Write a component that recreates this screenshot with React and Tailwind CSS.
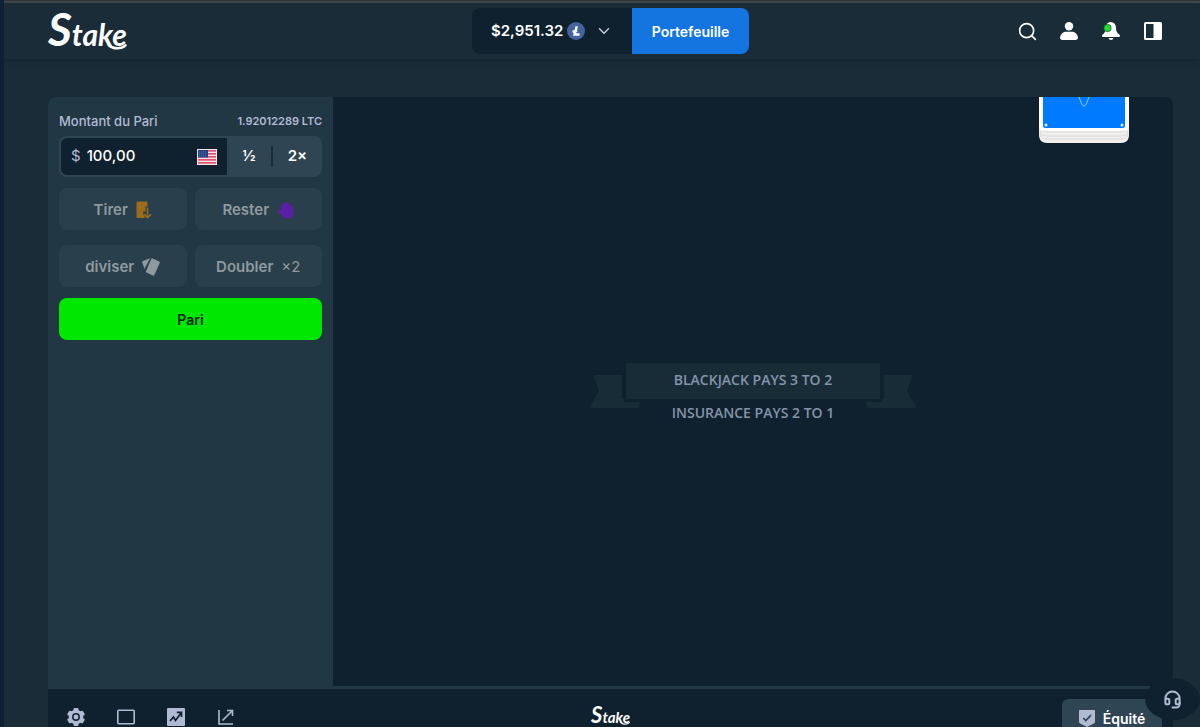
import React, { useState } from 'react';
import { ChevronDown, Headset, Search } from 'lucide-react';

function StakeLogo({ small }) {
  return (
    <a
      href="#"
      className={`relative inline-flex items-baseline font-['Lato'] font-bold italic text-white ${small ? 'text-[15px] leading-5' : 'text-[30px] leading-10'}`}
    >
      <span className={small ? 'text-[22px]' : 'text-[46px]'}>S</span>
      <span>take</span>
      <svg
        viewBox="0 0 20 6"
        className={small ? 'absolute right-0 bottom-0.5 w-2.5' : 'absolute right-0 bottom-1 w-5'}
        fill="none"
        stroke="currentColor"
        strokeWidth="2.500"
        strokeLinecap="round"
      >
        <path d="M2 1.500c4 3.500 12 4 16.500-.2" />
      </svg>
    </a>
  );
}

function UserIcon() {
  return (
    <svg width="18" height="18" viewBox="0 0 18 18" fill="currentColor">
      <circle cx="9" cy="4.200" r="4.200" />
      <path d="M0 15.500C.6 11.800 3.500 9.800 6.200 9.800h5.600c2.700 0 5.600 2 6.200 5.700 0 1.500-1 2.500-2.200 2.500H2.200C1 18 0 17 0 15.500z" />
    </svg>
  );
}

function BellIcon() {
  return (
    <svg width="18" height="18" viewBox="0 0 18 18">
      <path fill="currentColor" d="M8.500 0c4.200.3 5.500 3.200 5.500 6 0 3.500 1.200 5.200 3.500 6.700.8.600.5 2.300-.5 2.300H1c-1.200 0-1.400-1.600-.5-2.300C2.800 11.200 3.500 9.500 3.500 6c0-2.800 1.700-5.800 5-6zM6.600 16h4.800c-.3 1.300-1.200 2-2.400 2s-2.100-.7-2.400-2z" />
      <circle cx="5.500" cy="6" r="3.700" fill="#1fdc2e" stroke="#1a2c38" strokeWidth=".6" />
    </svg>
  );
}

function PanelIcon() {
  return (
    <svg width="18" height="18" viewBox="0 0 18 18">
      <rect width="18" height="18" rx="1.500" fill="currentColor" />
      <rect x="2" y="2" width="7.500" height="14" fill="#1a2c38" />
    </svg>
  );
}

function LitecoinIcon() {
  return (
    <svg width="18" height="18" viewBox="0 0 18 18">
      <circle cx="9" cy="9" r="9" fill="#44639f" />
      <path d="M9.800 4.200 7.600 12.500h5M5.600 10l4.500-1.600" fill="none" stroke="#fff" strokeWidth="2.400" />
    </svg>
  );
}

function FlagIcon() {
  return (
    <svg width="20" height="16" viewBox="0 0 20 16">
      <rect width="20" height="16" fill="#f4e4ea" />
      {[1, 4, 7, 10, 13].map((y) => (
        <rect key={y} x="1" y={y} width="18" height="1.700" fill="#e0526a" />
      ))}
      <rect x="1" y="1" width="10" height="7.500" fill="#1f4284" />
      <path d="M2 3h8M2 5h8M2 7h8" stroke="#7f9acb" strokeWidth=".6" strokeDasharray="1 1" />
    </svg>
  );
}

function HitIcon() {
  return (
    <svg width="16" height="18" viewBox="0 0 16 18">
      <path fill="#9c6c1c" d="M2 .500h8c1 0 1.500.6 1.500 1.500v3.500H9.600v5H7.200v2.700l2 3.800H2C1 17 .5 16.500.5 15.500V2C.5 1.100 1 .5 2 .5z" />
      <path d="M11.500 6.500v10M8 13.200l3.500 3.500 3.500-3.500" fill="none" stroke="#9c6c1c" strokeWidth="1.500" />
    </svg>
  );
}

function StandIcon() {
  return (
    <svg width="17" height="18" viewBox="0 0 17 18">
      <path fill="#5b1ea6" d="M4 4c0-1.500 1.600-1.600 2.200-.6C6 1.500 8.300 1 8.900 2.300c.5-1.500 2.800-1.300 2.900.4v.8c.7-.9 2.300-.5 2.300.8v1.400c.8-.7 2.300-.2 2.300 1V12c0 3.600-2.500 5.500-6 5.500-2.700 0-4.300-1-5.600-3L.8 10.500c-.7-1.300.8-2.400 1.900-1.500L4 10z" />
    </svg>
  );
}

function SplitIcon() {
  return (
    <svg width="18" height="18" viewBox="0 0 18 18" fill="#8f9a9f">
      <path d="M7.200.4 8.100.3 3.200 9.500 2.600 11 .2 4.500C0 3.700.2 3.200.9 2.900z" />
      <path d="M9.200.9c.3-.6.8-.8 1.400-.5l6.600 3.200c.6.300.8.800.5 1.400l-5.300 12c-.3.700-.8.900-1.500.6l-6.400-3c-.7-.3-.8-.8-.5-1.400z" />
    </svg>
  );
}

function GearIcon() {
  return (
    <svg width="18" height="18" viewBox="0 0 18 18">
      <g fill="currentColor">
        <circle cx="9" cy="9" r="7.300" />
        <rect x="6.500" y="0" width="5" height="18" rx="1" />
        <rect x="6.500" y="0" width="5" height="18" rx="1" transform="rotate(60 9 9)" />
        <rect x="6.500" y="0" width="5" height="18" rx="1" transform="rotate(120 9 9)" />
      </g>
      <circle cx="9" cy="9" r="3.200" fill="none" stroke="#0f212e" strokeWidth="1.500" />
    </svg>
  );
}

function TheatreIcon() {
  return (
    <svg width="18" height="18" viewBox="0 0 18 18" fill="none" stroke="currentColor" strokeWidth="1.600">
      <rect x=".8" y="2.200" width="16.400" height="13.600" rx="1" />
    </svg>
  );
}

function StatsIcon() {
  return (
    <svg width="18" height="18" viewBox="0 0 18 18">
      <rect width="18" height="18" rx="1" fill="currentColor" />
      <path d="m3 13 3.500-4 2 3.500L14 5M9.800 4.300h4.700V9" fill="none" stroke="#0f212e" strokeWidth="1.700" />
    </svg>
  );
}

function ExpandIcon() {
  return (
    <svg width="18" height="18" viewBox="0 0 18 18" fill="none" stroke="currentColor" strokeWidth="1.600">
      <path d="M2 2v14h14M5.500 12.500 15 3M10 2.500h5.500V8" />
    </svg>
  );
}

function ShieldIcon() {
  return (
    <svg width="16" height="17" viewBox="0 0 16 17">
      <path fill="#b1bad3" d="M1 0h14c.6 0 1 .4 1 1v10.500c0 1-.4 1.500-1.200 2L8 17l-6.800-3.500C.4 13 0 12.500 0 11.500V1c0-.6.4-1 1-1z" />
      <path d="m4.200 8 2.600 2.600L12 5.200" fill="none" stroke="#2f4553" strokeWidth="1.700" />
    </svg>
  );
}

function Ribbon() {
  return (
    <svg width="326" height="48" viewBox="0 0 326 48" fill="#182c38">
      <path d="M5 13h27v24h18v1.500c0 5-1 7.500-3 7.500H2c-1 0-2-1-1.500-2L9 29 4 15c-.5-1 0-2 1-2z" />
      <path d="M321 13h-27v24h-18v1.500c0 5 1 7.500 3 7.500h45c1 0 2-1 1.500-2L317 29l5-14c.5-1 0-2-1-2z" />
      <rect x="34" y="-1" width="258" height="41" fill="#0f212e" />
      <rect x="36" y="1" width="254" height="36" rx="2" />
    </svg>
  );
}

function CardDeck() {
  return (
    <svg width="90" height="46" viewBox="0 0 90 46">
      <path d="M0 0h90v38c0 5-3 8-8 8H8c-5 0-8-3-8-8z" fill="#f1f0ee" />
      <path d="M1 30c1 4 4 5 7 5h74c3 0 6-1 7-5M1 34c1 4 4 5 7 5h74c3 0 6-1 7-5M1 37c1 4 4 5 7 5h74c3 0 6-1 7-5" fill="none" stroke="#d9d8d6" />
      <path d="M0 0h90v29c0 3-3 5-6 5H6c-3 0-6-2-6-5z" fill="#fff" />
      <path d="M4 0h82v29c0 1-1 2-2 2H6c-1 0-2-1-2-2z" fill="#007bff" />
      <path d="M40 0c2 5 3 9 5 9s3-4 5-9" fill="none" stroke="#a9d6ff" />
      <circle cx="7" cy="28" r="1.500" fill="#d8ecff" />
      <circle cx="83" cy="28" r="1.500" fill="#d8ecff" />
    </svg>
  );
}

function ActionButton({ label, children }) {
  return (
    <button
      type="button"
      className="flex h-[42px] items-center justify-center gap-2 rounded-lg bg-[#293f4b] pt-0.5 text-[15px] font-semibold text-[#8f9a9f]"
    >
      {label}
      {children}
    </button>
  );
}

export default function App() {
  const [amount, setAmount] = useState('100,00');

  return (
    <div className="flex h-screen flex-col overflow-hidden border-l-4 border-[#0f2033] bg-[#1a2c38] font-['Inter',sans-serif]">
      <div className="h-[3px] shrink-0 border-t border-[#2c3338] bg-[#454648]" />

      {/* Header */}
      <header className="grid h-14 shrink-0 grid-cols-[1fr_auto_1fr] items-center pr-[27px] pl-11 shadow-md">
        <div><StakeLogo /></div>
        <div className="flex h-[46px] overflow-hidden rounded-lg">
          <button type="button" className="flex w-40 items-center bg-[#0f212e] pl-[19px] text-[15px] font-semibold text-white">
            $2,951.32
            <span className="ml-1"><LitecoinIcon /></span>
            <ChevronDown size={18} strokeWidth={2} className="ml-2.5 text-[#c5cbdd]" />
          </button>
          <button type="button" className="w-[117px] bg-[#1475e1] text-[14px] font-semibold text-white">
            Portefeuille
          </button>
        </div>
        <nav className="flex items-center justify-end gap-6 pr-[11px] text-white">
          <button type="button" aria-label="Rechercher"><Search size={21} strokeWidth={1.800} className="-mr-0.5" /></button>
          <button type="button" aria-label="Compte"><UserIcon /></button>
          <button type="button" aria-label="Notifications"><BellIcon /></button>
          <button type="button" aria-label="Panneau"><PanelIcon /></button>
        </nav>
      </header>

      {/* Game */}
      <main className="mt-[38px] mr-[27px] ml-11 shrink-0">
        <div className="flex min-h-[589px] overflow-hidden rounded-t-lg bg-[#0f212e]">
          <section className="w-[285px] shrink-0 bg-[#213743] px-[11px] pt-4">
            <div className="flex items-center justify-between text-[#b1bad3]">
              <label htmlFor="amount" className="text-[13px] leading-4 font-medium">Montant du Pari</label>
              <span className="text-[11px] leading-4 font-semibold">1.92012289 LTC</span>
            </div>

            <div className="mt-[7px] flex h-[41px] overflow-hidden rounded-lg bg-[#2f4553] text-[15px]">
              <div className="flex min-w-0 flex-1 items-center rounded-l-lg border-2 border-r-0 border-[#2f4553] bg-[#0f212e] px-2.5">
                <span className="text-[#b1bad3]">$</span>
                <input
                  id="amount"
                  className="ml-1.5 w-full min-w-0 bg-transparent font-medium text-white outline-none"
                  value={amount}
                  onChange={(e) => setAmount(e.target.value)}
                />
                <span className="shrink-0"><FlagIcon /></span>
              </div>
              <button type="button" className="w-11 font-semibold text-white">½</button>
              <div className="my-2.5 w-0.5 bg-[#1a2c38]" />
              <button type="button" className="w-[49px] font-semibold text-white">2×</button>
            </div>

            <div className="mt-[11px] grid grid-cols-2 gap-x-2 gap-y-[15px]">
              <ActionButton label="Tirer"><HitIcon /></ActionButton>
              <ActionButton label="Rester"><StandIcon /></ActionButton>
              <ActionButton label="diviser"><SplitIcon /></ActionButton>
              <ActionButton label="Doubler"><span className="font-normal">×2</span></ActionButton>
            </div>

            <button type="button" className="mt-[11px] h-[42px] w-full rounded-lg bg-[#00e701] text-[14px] font-semibold text-[#05240c]">
              Pari
            </button>
          </section>

          <section className="relative flex flex-1 items-center justify-center">
            <div className="absolute top-0 right-11"><CardDeck /></div>
            <div className="grid justify-items-center font-['Open_Sans'] text-[14px] leading-4 font-semibold text-[#8494a8]">
              <div className="relative">
                <Ribbon />
                <p className="absolute inset-x-0 top-2.5 text-center">BLACKJACK PAYS 3 TO 2</p>
              </div>
              <p className="-mt-[5px]">INSURANCE PAYS 2 TO 1</p>
            </div>
          </section>
        </div>

        <footer className="grid grid-cols-[1fr_auto_1fr] items-start border-t-[3px] border-[#213743] bg-[#0f212e] pt-2.5">
          <div className="flex gap-8 pt-[9px] pl-[19px] text-[#b1bad3]">
            <button type="button" aria-label="Paramètres"><GearIcon /></button>
            <button type="button" aria-label="Mode cinéma"><TheatreIcon /></button>
            <button type="button" aria-label="Statistiques"><StatsIcon /></button>
            <button type="button" aria-label="Agrandir"><ExpandIcon /></button>
          </div>
          <div className="pt-1.5"><StakeLogo small /></div>
          <button type="button" className="mr-[11px] flex h-[38px] w-[100px] items-center justify-center gap-2 justify-self-end rounded-md bg-[#2f4553] text-[14px] font-semibold text-white">
            <ShieldIcon />
            Équité
          </button>
        </footer>
      </main>

      {/* Support */}
      <button
        type="button"
        aria-label="Assistance"
        className="fixed right-0 bottom-[7px] flex h-[42px] w-[55px] items-center justify-center rounded-[50%] bg-[#0f212e] text-[#b1bad3]"
      >
        <Headset size={19} strokeWidth={2.500} />
      </button>
    </div>
  );
}
